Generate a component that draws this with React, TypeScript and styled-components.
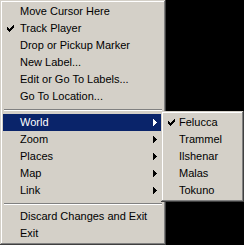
import React from 'react'
import styled, { createGlobalStyle } from 'styled-components'

const Global = createGlobalStyle`
html, body {
  margin: 0;
  padding: 0;
  background: #000;
}
body {
  font-family: "Liberation Sans", Arial, sans-serif;
  font-size: 11px;
}
`

const mainItems = [
  'Move Cursor Here',
  'Track Player',
  'Drop or Pickup Marker',
  'New Label...',
  'Edit or Go To Labels...',
  'Go To Location...',
]
const subMenus = ['World', 'Zoom', 'Places', 'Map', 'Link']
const facets = ['Felucca', 'Trammel', 'Ilshenar', 'Malas', 'Tokuno']

const Check = ({ color }: { color: string }) => (
  <svg width="7" height="7" viewBox="0 0 7 7" shapeRendering="crispEdges">
    <path
      d="M0 2h1v3h-1zM1 3h1v3h-1zM2 4h1v3h-1zM3 3h1v3h-1zM4 2h1v3h-1zM5 1h1v3h-1zM6 0h1v3h-1z"
      fill={color}
    />
  </svg>
)

const Arrow = ({ color }: { color: string }) => (
  <svg width="4" height="7" viewBox="0 0 4 7" shapeRendering="crispEdges">
    <path d="M0 0h1v7h-1zM1 1h1v5h-1zM2 2h1v3h-1zM3 3h1v1h-1z" fill={color} />
  </svg>
)

export default function App() {
  return (
    <>
      <Global />
      <Screen>
        <Menu>
          {mainItems.map((label, i) => (
            <Item key={label}>
              <CheckSlot>{i === 1 && <Check color="#000" />}</CheckSlot>
              <Label>{label}</Label>
            </Item>
          ))}
          <Separator />
          {subMenus.map((label, i) => (
            <Item key={label} $active={i === 0}>
              <Label>{label}</Label>
              <ArrowSlot>
                <Arrow color={i === 0 ? '#fff' : '#000'} />
              </ArrowSlot>
              {i === 0 && (
                <SubMenu>
                  {facets.map((f, j) => (
                    <SubItem key={f}>
                      <CheckSlot>{j === 0 && <Check color="#000" />}</CheckSlot>
                      <Label>{f}</Label>
                    </SubItem>
                  ))}
                </SubMenu>
              )}
            </Item>
          ))}
          <Separator />
          <Item>
            <Label>Discard Changes and Exit</Label>
          </Item>
          <Item>
            <Label>Exit</Label>
          </Item>
        </Menu>
      </Screen>
    </>
  )
}

const Screen = styled.div`
width: 244px;
height: 245px;
background: #000;
display: flex;
align-items: flex-start;
overflow: hidden;
`

const Menu = styled.div`
width: 166px;
height: 245px;
box-sizing: border-box;
padding: 3px;
background: #d4d0c8;
box-shadow: inset -1px -1px #404040, inset 1px 1px #d4d0c8,
  inset -2px -2px #808080, inset 2px 2px #fff;
display: flex;
flex-direction: column;
`

const Item = styled.div<{ $active?: boolean }>`
position: relative;
height: 17px;
flex: none;
display: flex;
align-items: center;
padding-left: 17px;
padding-right: 6px;
background: ${p => (p.$active ? '#0a246a' : 'transparent')};
color: ${p => (p.$active ? '#fff' : '#000')};
white-space: nowrap;
`

const SubItem = styled(Item)`
padding-left: 15px;
`

const Label = styled.span`
flex: 1;
line-height: 17px;
`

const CheckSlot = styled.span`
position: absolute;
left: 4px;
top: 5px;
width: 7px;
height: 7px;
display: flex;
`

const ArrowSlot = styled.span`
display: flex;
align-items: center;
`

const Separator = styled.div`
height: 9px;
flex: none;
display: flex;
align-items: center;
padding: 0 1px;
&::before {
  content: '';
  flex: 1;
  height: 1px;
  border-top: 1px solid #808080;
  border-bottom: 1px solid #fff;
  height: 0;
}
`

const SubMenu = styled.div`
position: absolute;
left: 158px;
top: -3px;
width: 83px;
box-sizing: border-box;
padding: 3px;
background: #d4d0c8;
box-shadow: inset -1px -1px #404040, inset 1px 1px #d4d0c8,
  inset -2px -2px #808080, inset 2px 2px #fff;
display: flex;
flex-direction: column;
color: #000;
`
